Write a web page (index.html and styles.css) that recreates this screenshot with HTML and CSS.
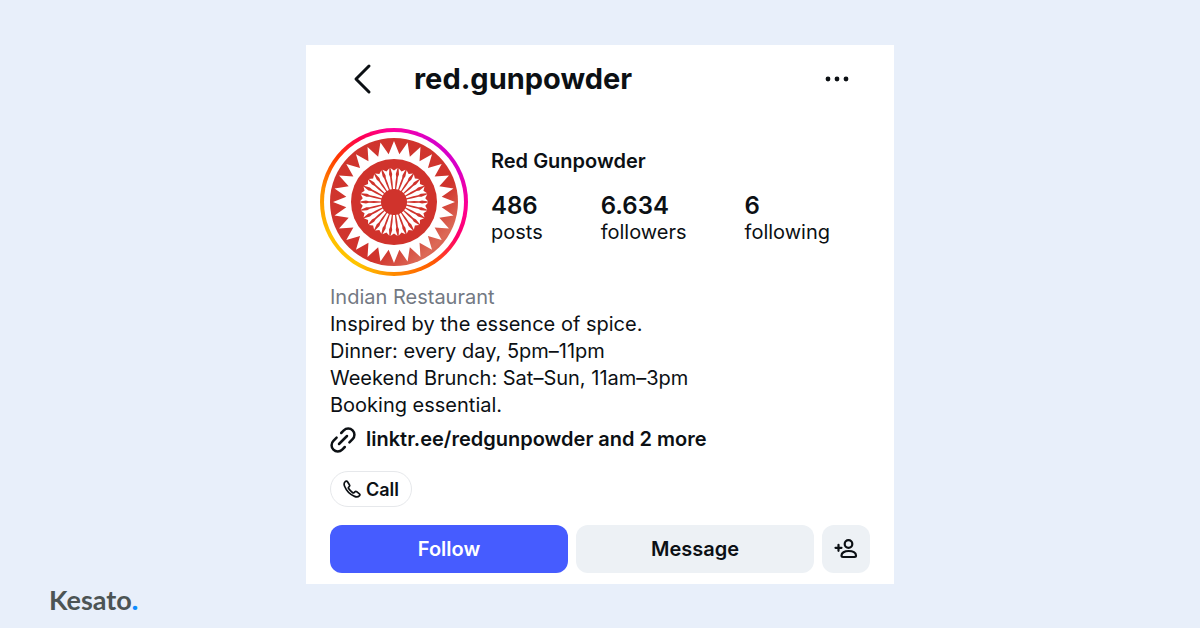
FILE: index.html
```
<!DOCTYPE html>
<html lang="en">
<head>
<meta charset="utf-8">
<meta name="viewport" content="width=device-width, initial-scale=1">
<title>red.gunpowder</title>
<link rel="stylesheet" href="styles.css">
</head>
<body>
<main class="profile">
  <header class="topbar">
    <button class="icon-btn back" type="button" aria-label="Back">
      <svg width="20" height="32" viewBox="0 0 20 32" fill="none" stroke="currentColor" stroke-width="3" stroke-linecap="round" stroke-linejoin="round"><path d="M17 3 4 16l13 13"/></svg>
    </button>
    <h1 class="username">red.gunpowder</h1>
    <button class="icon-btn more" type="button" aria-label="More options">
      <svg width="24" height="6" viewBox="0 0 24 6" fill="currentColor"><circle cx="3" cy="3" r="2.4"/><circle cx="12" cy="3" r="2.4"/><circle cx="21" cy="3" r="2.4"/></svg>
    </button>
  </header>

  <section class="summary">
    <div class="avatar">
      <svg class="avatar-logo" viewBox="-70 -70 140 140" role="img" aria-label="Red Gunpowder logo">
        <defs>
          <linearGradient id="red" x1="0" y1="0" x2="1" y2="1">
            <stop offset="0" stop-color="#cf352e"/>
            <stop offset="0.65" stop-color="#d0332c"/>
            <stop offset="0.83" stop-color="#dc6a57"/>
            <stop offset="1" stop-color="#cf3a32"/>
          </linearGradient>
        </defs>
        <circle r="70" fill="#fff"/>
        <circle r="64" fill="url(#red)"/>
        <path id="star" fill="#fff"/>
        <circle r="43" fill="#d0332c"/>
        <g id="petals" fill="#fff"></g>
      </svg>
    </div>
    <div class="facts">
      <h2 class="name">Red Gunpowder</h2>
      <ul class="stats">
        <li><strong>486</strong>posts</li>
        <li><strong>6.634</strong>followers</li>
        <li><strong>6</strong>following</li>
      </ul>
    </div>
  </section>

  <section class="bio">
    <p class="category">Indian Restaurant</p>
    <p>Inspired by the essence of spice.</p>
    <p>Dinner: every day, 5pm–11pm</p>
    <p>Weekend Brunch: Sat–Sun, 11am–3pm</p>
    <p>Booking essential.</p>
  </section>

  <a class="links" href="#">
    <svg width="26" height="26" viewBox="0 0 26 26" fill="none" stroke="currentColor" stroke-width="2.5" stroke-linecap="round"><path d="m9 17 8-8M11.200 6l2.600-2.600a6.200 6.200 0 0 1 8.800 8.800L19.400 15.400M14.800 20l-2.600 2.600a6.200 6.200 0 0 1-8.800-8.800L6.600 10.600"/></svg>
    linktr.ee/redgunpowder and 2 more
  </a>

  <button class="call" type="button">
    <svg width="18" height="18" viewBox="0 0 18 18" fill="none" stroke="currentColor" stroke-width="1.7" stroke-linejoin="round"><path d="M2.200 1.600C1 2.700.800 4.300 1.600 6.300c1.800 4.500 5.500 8.300 10 10.100 2 .800 3.700.500 4.900-.800.500-.600.500-1.300-.100-1.800l-2.700-2.100c-.600-.400-1.300-.400-1.800.100l-.900.900c-.400.300-.900.300-1.300 0-1.600-1.100-3-2.500-4.100-4.100-.300-.400-.300-.900 0-1.300l.700-.800c.500-.500.500-1.200.100-1.800L4.500 1.700c-.500-.800-1.500-.900-2.300-.100Z"/></svg>
    Call
  </button>

  <div class="actions">
    <button class="btn btn-follow" type="button">Follow</button>
    <button class="btn" type="button">Message</button>
    <button class="btn btn-add" type="button" aria-label="Similar accounts">
      <svg width="24" height="20" viewBox="0 0 24 20" fill="none" stroke="currentColor" stroke-width="2.2" stroke-linecap="round" stroke-linejoin="round"><circle cx="14.500" cy="5" r="3.800"/><path d="M1.500 8.800h6M4.500 5.800v6M7.500 16.600c0-2.800 3-4.600 7.200-4.600s7.300 1.800 7.300 4.600c0 .900-.500 1.400-1.500 1.400H9c-1 0-1.500-.5-1.500-1.400Z"/></svg>
    </button>
  </div>
</main>

<footer class="brand">Kesato<span>.</span></footer>
<script src="script.js"></script>
</body>
</html>
```
FILE: styles.css
```
* {
  box-sizing: border-box;
}

body {
  margin: 0;
  min-height: 100vh;
  padding: 45px 24px 12px;
  background: #e8effa;
  color: #0c1014;
  font-family: Inter, "Liberation Sans", sans-serif;
  font-size: 20px;
  line-height: 27px;
}

h1, h2, p, ul {
  margin: 0;
  padding: 0;
}

button {
  font: inherit;
  color: inherit;
  border: 0;
  cursor: pointer;
}

svg {
  display: block;
  flex: none;
}

.profile {
  max-width: 588px;
  margin: 0 auto;
  padding: 14px 24px 11px;
  background: #fff;
}

.topbar {
  display: flex;
  align-items: center;
  height: 40px;
  padding: 0 21px 0 22px;
}

.icon-btn {
  padding: 0;
  background: none;
}

.username {
  flex: 1;
  margin-left: 42px;
  font-size: 29px;
  font-weight: 700;
  line-height: 40px;
}

.summary {
  display: flex;
  gap: 23px;
  margin: 29px 0 8px -10px;
}

.avatar {
  flex: none;
  width: 148px;
  height: 148px;
  padding: 4px;
  border-radius: 50%;
  background: conic-gradient(#ff00a0, #d800c8 30deg, #d800c8 60deg, #ff0090 95deg, #ff0069 120deg, #ff5c00 148deg, #ff8a00 180deg, #ffc400 210deg, #ffc000 245deg, #ff9000 280deg, #ff3a00 308deg, #ff0050 332deg, #ff00a0);
}

.facts {
  flex: 1;
  padding-top: 20px;
}

.name {
  font-size: 20px;
  font-weight: 600;
  line-height: 27px;
}

.stats {
  display: flex;
  gap: 58px;
  margin-top: 17px;
  list-style: none;
}

.stats strong {
  display: block;
  font-size: 24px;
  font-weight: 600;
}

.category {
  color: #737983;
}

.links {
  display: flex;
  align-items: center;
  gap: 10px;
  margin-top: 7px;
  color: inherit;
  font-weight: 600;
  text-decoration: none;
}

.call {
  display: flex;
  align-items: center;
  gap: 5px;
  height: 36px;
  margin-top: 18px;
  padding: 0 12px;
  border: 1px solid #e6e8eb;
  border-radius: 18px;
  background: #fff;
  font-size: 18px;
  font-weight: 600;
}

.actions {
  display: flex;
  gap: 8px;
  margin-top: 18px;
}

.btn {
  flex: 1;
  height: 48px;
  padding: 0;
  border-radius: 12px;
  background: #edf1f5;
  font-weight: 600;
}

.btn-follow {
  background: #465cff;
  color: #fff;
}

.btn-add {
  display: flex;
  flex: none;
  align-items: center;
  justify-content: center;
  width: 48px;
}

.brand {
  padding-left: 25px;
  color: #4c5454;
  font-family: Lato, sans-serif;
  font-size: 27px;
  font-weight: 700;
  line-height: 32px;
}

.brand span {
  color: #0a8cff;
  font-weight: 900;
}
```
FILE: script.js
```
// draws the repeating parts of the round logo
var TEETH = 28;
var PETALS = 26;

function point(radius, angle) {
  return (radius * Math.sin(angle)).toFixed(2) + ' ' + (-radius * Math.cos(angle)).toFixed(2);
}

var d = '';
for (var i = 0; i < TEETH; i++) {
  var a = i * 2 * Math.PI / TEETH;
  d += (i ? 'L' : 'M') + point(61, a) + 'L' + point(48, a + Math.PI / TEETH);
}
document.getElementById('star').setAttribute('d', d + 'Z');

var petals = document.getElementById('petals');
for (var j = 0; j < PETALS; j++) {
  var petal = document.createElementNS('http://www.w3.org/2000/svg', 'path');
  petal.setAttribute('d', 'M-1-13-1.500-20-2.200-25-1.800-28-3.600-34 0-31.500 3.600-34 1.800-28 2.200-25 1.500-20 1-13Z');
  petal.setAttribute('transform', 'rotate(' + (j * 360 / PETALS) + ')');
  petals.appendChild(petal);
}
```
